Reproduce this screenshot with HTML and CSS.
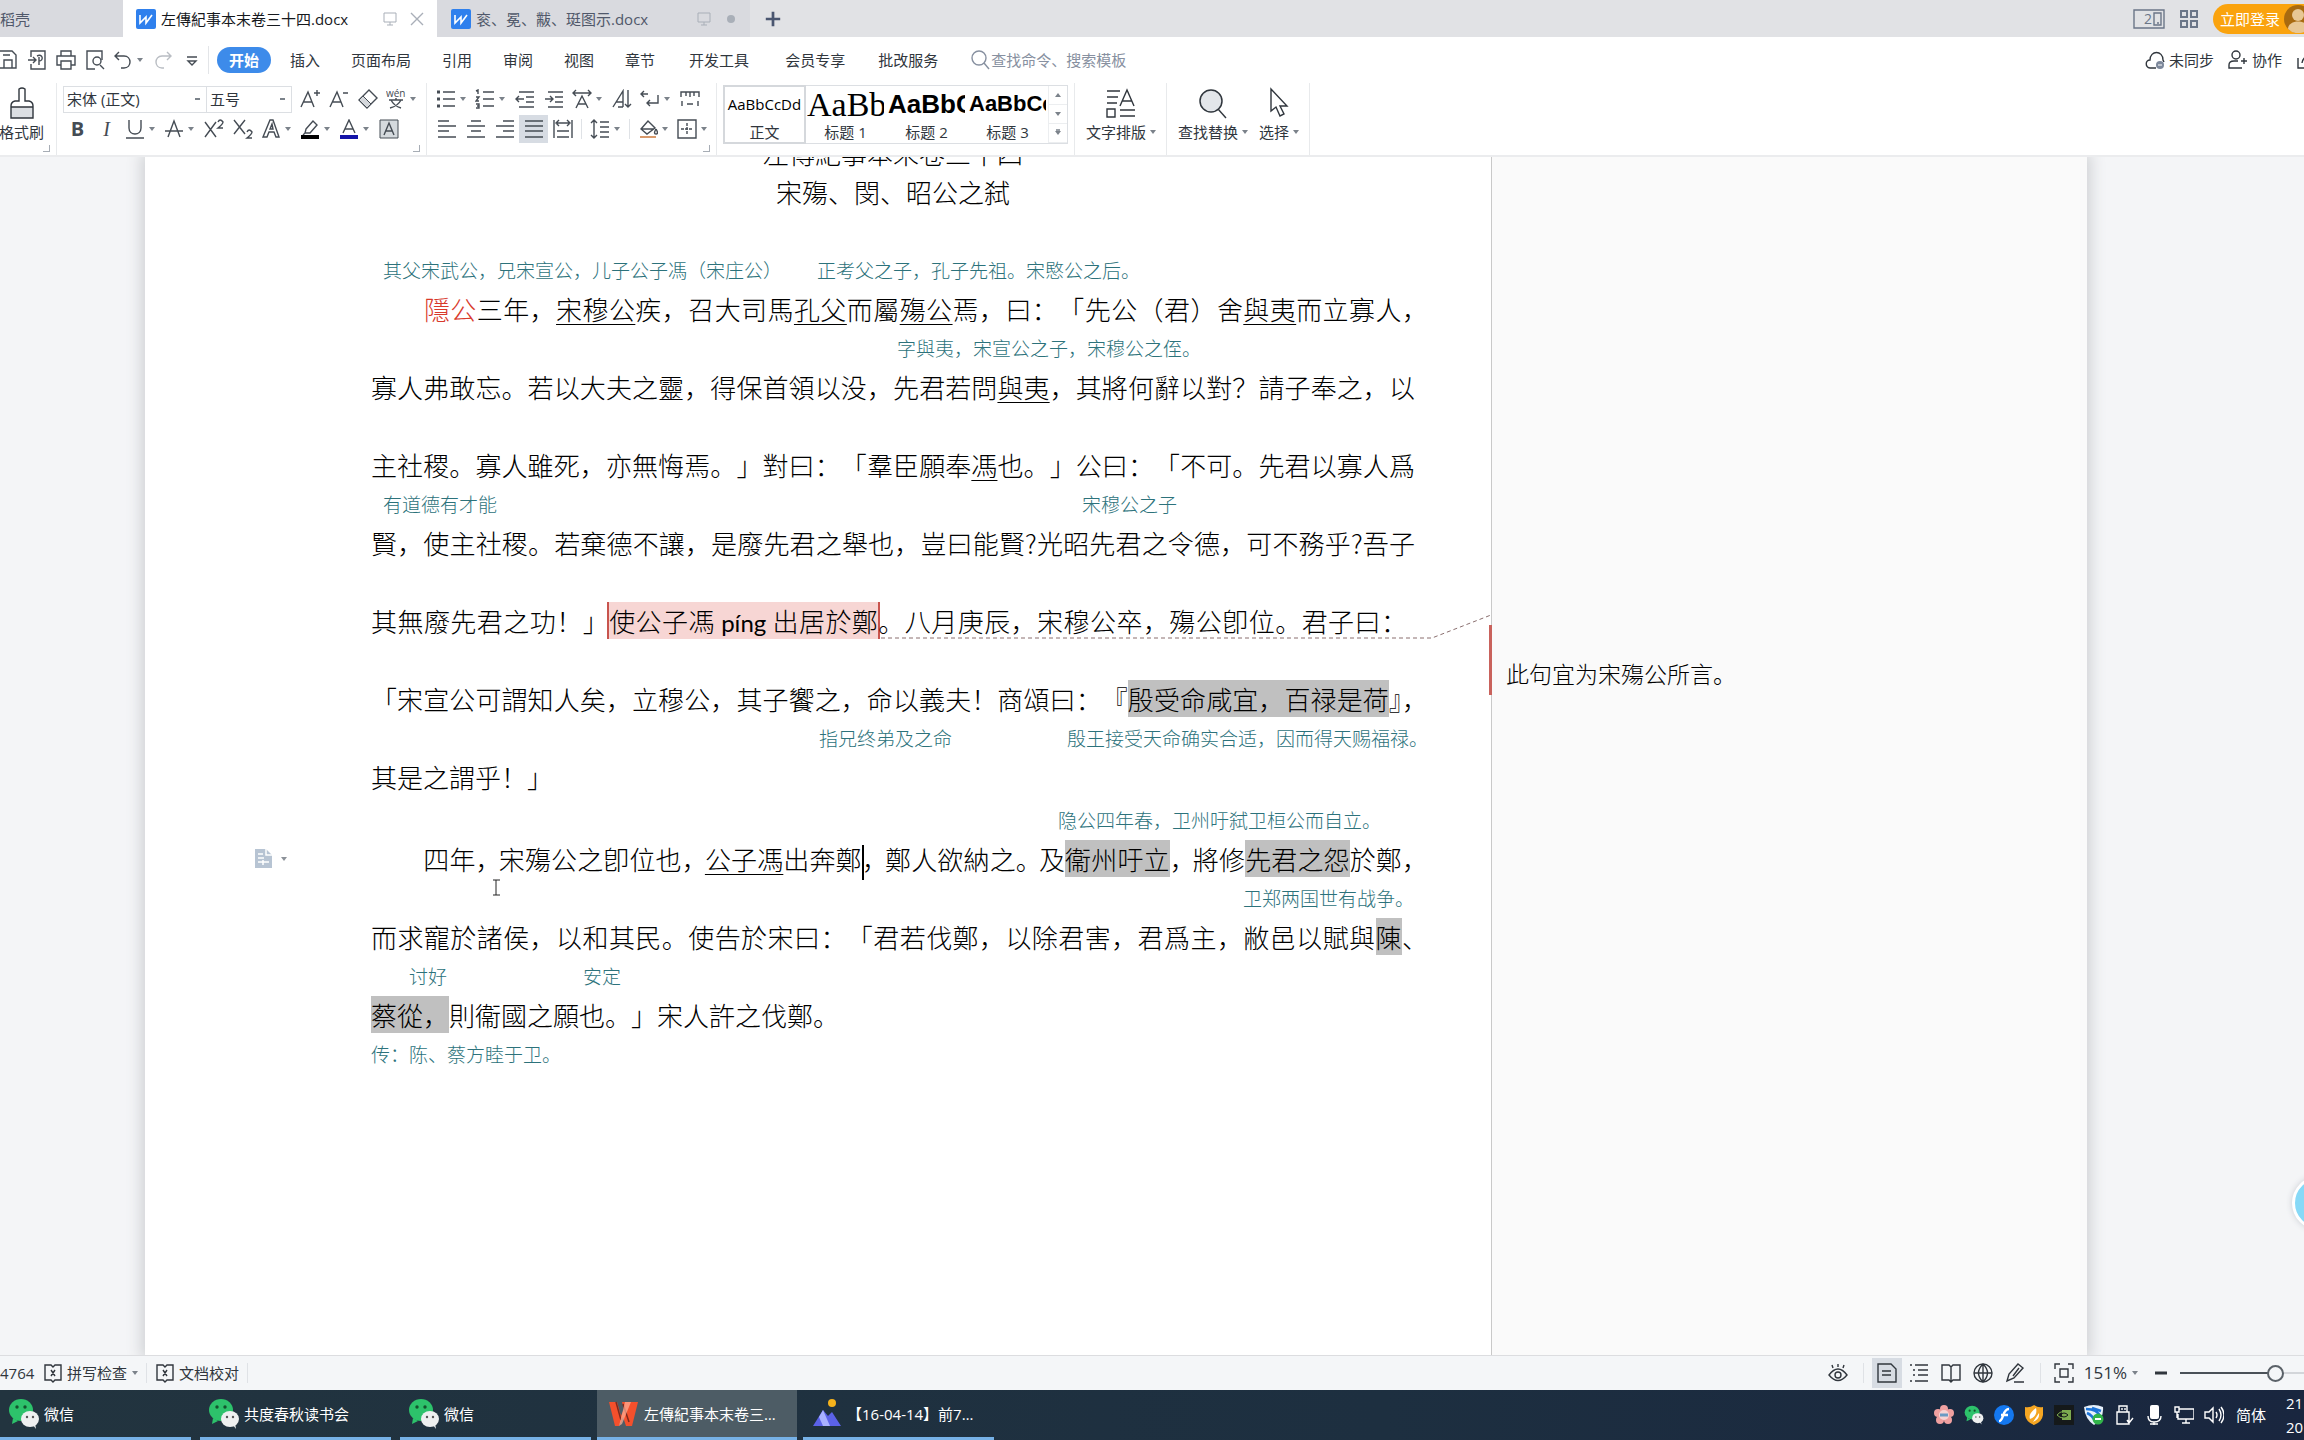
FILE: index.html
```html
<!DOCTYPE html>
<html lang="zh-CN">
<head>
<meta charset="utf-8">
<title>左傳紀事本末卷三十四.docx</title>
<meta name="viewport" content="width=device-width, initial-scale=1">
<link rel="stylesheet" href="styles.css">
</head>
<body>
<svg class="defs" aria-hidden="true">
  <symbol id="wdoc" viewBox="0 0 20 20"><rect width="20" height="20" rx="2" fill="#2f80ed"/><path d="M4 6v8l6-6 0 6 6-8" fill="none" stroke="#fff" stroke-width="1.6"/></symbol>
  <symbol id="monitor" viewBox="0 0 16 16"><path d="M2 2h12v9H2zM8 11v3M5 14h6" fill="none" stroke="currentColor"/></symbol>
  <symbol id="wechat" viewBox="0 0 32 32"><ellipse cx="13" cy="12" rx="12" ry="11" fill="#2dc26b"/><path d="M5 20l-1 6 6-3z" fill="#2dc26b"/><circle cx="9" cy="9" r="1.7" fill="#14532d"/><circle cx="17" cy="9" r="1.7" fill="#14532d"/><ellipse cx="22" cy="21" rx="9" ry="8" fill="#eef0f0"/><path d="M25 27l3 4-1-6z" fill="#eef0f0"/><circle cx="19" cy="19" r="1.2" fill="#555"/><circle cx="25" cy="19" r="1.2" fill="#555"/></symbol>
  <symbol id="proof" viewBox="0 0 20 20"><path d="M2 2h6l2 2 2-2h6v15h-6l-2 2-2-2H2zM8 7l4 6M12 7l-4 6" fill="none" stroke="currentColor" stroke-width="1.4"/></symbol>
</svg>

<header class="tabs">
  <a class="tab tab-home" href="#">稻壳</a>
  <a class="tab tab-active" href="#"><svg class="i"><use href="#wdoc"/></svg><span>左傳紀事本末卷三十四.docx</span><svg class="i16 push"><use href="#monitor"/></svg><svg class="i16" viewBox="0 0 16 16"><path d="M2 2l12 12M14 2L2 14" class="s"/></svg></a>
  <a class="tab tab-idle" href="#"><svg class="i"><use href="#wdoc"/></svg><span>衮、冕、黻、珽图示.docx</span><svg class="i16 push"><use href="#monitor"/></svg><svg class="i16" viewBox="0 0 16 16"><circle cx="8" cy="8" r="4" fill="currentColor"/></svg></a>
  <button class="tab-add" aria-label="新建"><svg class="i" viewBox="0 0 20 20"><path d="M10 2v16M2 10h16" class="s w3"/></svg></button>
  <div class="account">
    <button class="plain" aria-label="窗口"><svg width="32" height="20" viewBox="0 0 32 20"><path d="M1 1h30v18H1zM21 4h7v12h-7zM24 14h2" class="s"/><text x="11" y="15" font-size="14" fill="currentColor">2</text></svg></button>
    <button class="plain" aria-label="应用"><svg class="i" viewBox="0 0 20 20"><path d="M2 2h6v6H2zM12 2h6v6h-6zM2 12h6v6H2zM12 12h6v6h-6z" class="s w2"/></svg></button>
    <button class="login">立即登录<svg width="28" height="28" viewBox="0 0 28 28"><circle cx="14" cy="14" r="14" fill="#a86a10"/><circle cx="14" cy="10" r="6" fill="#e8c795"/><path d="M4 24c0-10 20-10 20 0a14 14 0 0 1-20 0z" fill="#e8c795"/></svg></button>
  </div>
</header>

<nav class="menu">
  <div class="quick">
    <button class="tool" aria-label="保存"><svg class="i" viewBox="0 0 20 20"><path d="M1 1h13l4 4v13H1zM6 18v-8h8v8M5 5h7" class="s"/></svg></button>
    <button class="tool" aria-label="输出"><svg class="i" viewBox="0 0 20 20"><path d="M4 7V1h14v18H4v-5M1 10h7M6 7l3 3-3 3M10 6c6-3 7 5 2 5M12 7v8" class="s"/></svg></button>
    <button class="tool" aria-label="打印"><svg class="i" viewBox="0 0 20 20"><path d="M5 6V1h10v5M5 15H1V6h18v9h-4M5 11h10v8H5z" class="s"/></svg></button>
    <button class="tool" aria-label="预览"><svg class="i" viewBox="0 0 20 20"><path d="M17 10V1H2v18h8M15 15l4 4" class="s"/><circle cx="12" cy="11" r="4" class="s"/></svg></button>
    <button class="tool drop" aria-label="撤销"><svg class="i" viewBox="0 0 20 20"><path d="M6 2L2 6l4 4M2 6h9c8 0 8 12 0 12H8" class="s"/></svg></button>
    <button class="tool faint" aria-label="恢复"><svg class="i" viewBox="0 0 20 20"><path d="M14 2l4 4-4 4M18 6H9c-8 0-8 12 0 12h2" class="s"/></svg></button>
    <button class="tool" aria-label="更多"><svg class="i" viewBox="0 0 20 20"><path d="M5 7h10M6 11h8l-4 4z" class="s"/></svg></button>
  </div>
  <div class="menu-items">
    <button class="current">开始</button><button>插入</button><button>页面布局</button><button>引用</button><button>审阅</button><button>视图</button><button>章节</button><button class="wide">开发工具</button><button class="wide">会员专享</button><button>批改服务</button>
  </div>
  <label class="search"><svg class="i" viewBox="0 0 20 20"><circle cx="9" cy="8" r="7" class="s"/><path d="M14 13l5 6" class="s"/></svg><input type="text" placeholder="查找命令、搜索模板" aria-label="查找命令"></label>
  <div class="share">
    <button class="plain"><svg class="i" viewBox="0 0 20 20"><path d="M11 18H5c-5-1-5-8 0-8 0-10 13-10 13 0l1 2" class="s"/><circle cx="15" cy="15" r="4" fill="#7d889b"/><path d="M13 15h4" stroke="#fff"/></svg>未同步</button>
    <button class="plain"><svg class="i" viewBox="0 0 20 20"><circle cx="8" cy="5" r="4" class="s"/><path d="M14 18H1v-3q0-4 5-4h4M13 11h6M16 8v6" class="s"/></svg>协作</button>
    <button class="plain" aria-label="分享"><svg class="i" viewBox="0 0 20 20"><path d="M2 8v10h16v-5M6 13c1-6 5-8 11-8" class="s"/></svg></button>
  </div>
</nav>

<section class="ribbon" aria-label="开始">
  <div class="group painter">
    <button class="big"><svg width="30" height="32" viewBox="0 0 30 32"><path d="M4 20h22v11H4z" fill="#dcdfe3"/><path d="M12 2q3-2 6 0v12h4q4 1 4 5v12H4V19q0-4 4-5h4zM4 20h22" class="s"/></svg><span>格式刷</span></button>
  </div>
  <div class="group rows font-group">
    <div class="row">
      <select class="combo face" aria-label="字体"><option>宋体 (正文)</option></select><select class="combo size" aria-label="字号"><option>五号</option></select>
      <button class="tool" aria-label="增大字号"><svg class="i" viewBox="0 0 20 20"><path d="M1 18L8 3l6 15M3 13h9M14 4h6M17 1v6" class="s"/></svg></button>
      <button class="tool" aria-label="减小字号"><svg class="i" viewBox="0 0 20 20"><path d="M1 18L8 3l6 15M3 13h9M14 4h5" class="s"/></svg></button>
      <button class="tool" aria-label="清除格式"><svg class="i" viewBox="0 0 20 20"><path d="M1 11L11 1l8 8L9 19z" class="s"/><path d="M5 7l8 8-4 4-8-8z" fill="#d5d8dc" stroke="currentColor"/></svg></button>
      <button class="tool drop" aria-label="拼音指南"><svg class="i" viewBox="0 0 20 20"><text x="0" y="8" font-size="10" fill="currentColor">wén</text><path d="M3 11h14M10 9v2M5 11q3 6 10 8M15 11q-3 6-11 8" class="s"/></svg></button>
    </div>
    <div class="row">
      <button class="tool glyph bold">B</button>
      <button class="tool glyph ital">I</button>
      <button class="tool drop" aria-label="下划线"><svg class="i" viewBox="0 0 20 20"><path d="M4 1v8c0 8 12 8 12 0V1M1 19h18" class="s"/></svg></button>
      <button class="tool drop" aria-label="删除线"><svg class="i" viewBox="0 0 20 20"><path d="M4 18l6-16 6 16M1 12h18" class="s"/></svg></button>
      <button class="tool" aria-label="上标"><svg class="i" viewBox="0 0 20 20"><path d="M1 3l11 15M12 3L1 18M14 3q2-4 5 0 0 2-5 6h5" class="s"/></svg></button>
      <button class="tool" aria-label="下标"><svg class="i" viewBox="0 0 20 20"><path d="M1 1l11 14M12 1L1 15M14 13q2-4 5 0 0 2-5 6h5" class="s"/></svg></button>
      <button class="tool drop" aria-label="文字效果"><svg class="i" viewBox="0 0 20 20"><path d="M2 18L9 1h3l6 17h-3l-2-5H8l-2 5zM9 10h3l-1-5z" class="s"/></svg></button>
      <button class="tool drop" aria-label="突出显示"><svg class="i" viewBox="0 0 20 20"><path d="M6 10l7-8 4 4-7 8H5zM5 14l-2 2" class="s"/><path d="M1 16h18v4H1z" fill="#000"/></svg></button>
      <button class="tool drop" aria-label="字体颜色"><svg class="i" viewBox="0 0 20 20"><path d="M4 14l6-13 6 13M6 10h8" class="s"/><path d="M1 16h18v4H1z" fill="#1414a8"/></svg></button>
      <button class="tool" aria-label="字符底纹"><svg class="i" viewBox="0 0 20 20"><path d="M1 1h18v18H1z" fill="#d5dade" stroke="currentColor"/><path d="M5 16l5-12 5 12M7 12h6" class="s"/></svg></button>
    </div>
  </div>
  <div class="group rows para-group">
    <div class="row">
      <button class="tool drop" aria-label="项目符号"><svg class="i" viewBox="0 0 20 20"><path d="M7 3h12M7 10h12M7 17h12" class="s"/><path d="M1 3h3M1 10h3M1 17h3" class="s w3"/></svg></button>
      <button class="tool drop" aria-label="编号"><svg class="i" viewBox="0 0 20 20"><path d="M8 3h11M8 10h11M8 17h11M1 2l2-1v4M1 8h3l-3 4h3M1 15h3v4H1M2 17h2" class="s"/></svg></button>
      <button class="tool" aria-label="减少缩进"><svg class="i" viewBox="0 0 20 20"><path d="M4 3h15M11 8h8M11 13h8M4 18h15M1 10h8M4 7l-3 3 3 3" class="s"/></svg></button>
      <button class="tool" aria-label="增加缩进"><svg class="i" viewBox="0 0 20 20"><path d="M4 3h15M11 8h8M11 13h8M4 18h15M1 10h8M6 7l3 3-3 3" class="s"/></svg></button>
      <button class="tool drop" aria-label="中文版式"><svg class="i" viewBox="0 0 20 20"><path d="M4 19l6-12 6 12M6 15h8M1 4h18M4 1L1 4l3 3M16 1l3 3-3 3" class="s"/></svg></button>
      <button class="tool" aria-label="排序"><svg class="i" viewBox="0 0 20 20"><path d="M1 18L11 2v16M4 13h7M6 18h5M16 1v17M13 15l3 3 3-3" class="s"/></svg></button>
      <button class="tool drop" aria-label="换行符"><svg class="i" viewBox="0 0 20 20"><path d="M4 2L1 5l3 3M1 5h7M18 6v8H7M10 11l-3 3 3 3" class="s"/></svg></button>
      <button class="tool" aria-label="制表位"><svg class="i" viewBox="0 0 20 20"><path d="M1 8V3h18v5M6 3v4M10 3v5M14 3v4M2 12v5M18 12v5M7 15h6" class="s"/></svg></button>
    </div>
    <div class="row">
      <button class="tool" aria-label="左对齐"><svg class="i" viewBox="0 0 20 20"><path d="M1 2h11M1 7h18M1 12h11M1 18h18" class="s"/></svg></button>
      <button class="tool" aria-label="居中"><svg class="i" viewBox="0 0 20 20"><path d="M5 2h10M1 7h18M5 12h10M1 18h18" class="s"/></svg></button>
      <button class="tool" aria-label="右对齐"><svg class="i" viewBox="0 0 20 20"><path d="M8 2h11M1 7h18M8 12h11M1 18h18" class="s"/></svg></button>
      <button class="tool pressed" aria-label="两端对齐"><svg class="i" viewBox="0 0 20 20"><path d="M1 2h18M1 7h18M1 12h18M1 18h18" class="s"/></svg></button>
      <button class="tool" aria-label="分散对齐"><svg class="i" viewBox="0 0 20 20"><path d="M1 1v18M19 1v18M4 4h12M6 1L3 4l3 3M14 1l3 3-3 3M4 12h12M4 18h12" class="s"/></svg></button>
      <i class="rule"></i>
      <button class="tool drop" aria-label="行距"><svg class="i" viewBox="0 0 20 20"><path d="M4 1v18M1 4l3-3 3 3M1 16l3 3 3-3M10 3h9M10 8h9M10 13h9M10 18h9" class="s"/></svg></button>
      <i class="rule"></i>
      <button class="tool drop" aria-label="底纹颜色"><svg class="i" viewBox="0 0 20 20"><path d="M3 10l7-8 7 7-8 6zM3 10h13" class="s"/><path d="M18 10q3 5 0 5t0-5" class="s"/><path d="M2 18h16" stroke="#d99a6c" stroke-width="2"/></svg></button>
      <button class="tool drop" aria-label="边框"><svg class="i" viewBox="0 0 20 20"><path d="M1 1h18v18H1z" class="s"/><path d="M10 4v12M4 10h12" class="s" stroke-dasharray="3 1"/></svg></button>
    </div>
  </div>
  <div class="group gallery-group">
    <div class="gallery">
      <button class="style on"><b class="p0">AaBbCcDd</b><span>正文</span></button>
      <button class="style"><b class="p1">AaBb</b><span>标题 1</span></button>
      <button class="style"><b class="p2">AaBbC</b><span>标题 2</span></button>
      <button class="style"><b class="p3">AaBbCc</b><span>标题 3</span></button>
      <div class="spin"><button aria-label="上"><i class="up"></i></button><button aria-label="下"><i class="down"></i></button><button aria-label="全部"><i class="down bar"></i></button></div>
    </div>
  </div>
  <div class="group layout-group">
    <button class="big"><svg width="32" height="32" viewBox="0 0 32 32"><path d="M2 4h13M2 10h11M2 16h10M2 22h8v8H2zM15 23h15M15 29h15M15 19l7-16 7 16M17 14h10" class="s"/></svg><span class="arrow">文字排版</span></button>
  </div>
  <div class="group find-group">
    <button class="big"><svg width="32" height="32" viewBox="0 0 32 32"><circle cx="14" cy="14" r="11" fill="#e3e6ea" stroke="currentColor" stroke-width="1.5"/><path d="M21 22l8 9" class="s"/></svg><span class="arrow">查找替换</span></button>
    <button class="big"><svg width="32" height="32" viewBox="0 0 32 32"><path d="M8 2v22l5-4 4 9 4-2-4-8h7z" class="s"/></svg><span class="arrow">选择</span></button>
  </div>
</section>

<main class="canvas">
  <div class="page">
    <article class="doc" lang="zh-CN">
      <h1 class="title">左傳紀事本末卷三十四</h1>
      <h2 class="title">宋殤、閔、昭公之弑</h2>
      <section class="para first">
        <p class="notes"><span class="n-edge">其父宋武公，兄宋宣公，儿子公子馮（宋庄公）</span><span class="n-kong">正考父之子，孔子先祖。宋愍公之后。</span></p>
        <p class="line hang">　　<span class="red">隱公</span>三年，<u>宋穆公</u>疾，召大司馬<u>孔父</u>而屬<u>殤公</u>焉，曰：「先公（君）舍<u>與夷</u>而立寡人，</p>
        <p class="notes"><span class="n-yuyi">字與夷，宋宣公之子，宋穆公之侄。</span></p>
        <p class="line">寡人弗敢忘。若以大夫之靈，得保首領以没，先君若問<u>與夷</u>，其將何辭以對？請子奉之，以</p>
        <p class="notes"></p>
        <p class="line">主社稷。寡人雖死，亦無悔焉。」對曰：「羣臣願奉<u>馮</u>也。」公曰：「不可。先君以寡人爲</p>
        <p class="notes"><span class="n-edge">有道德有才能</span><span class="n-son">宋穆公之子</span></p>
        <p class="line">賢，使主社稷。若棄德不讓，是廢先君之舉也，豈曰能賢?光昭先君之令德，可不務乎?吾子</p>
        <p class="notes"></p>
        <p class="line narrow">其無廢先君之功！」<mark class="commented">使公子馮 <span class="pinyin">píng</span> 出居於鄭</mark>。八月庚辰，宋穆公卒，殤公卽位。君子曰：<svg class="leader" width="610" height="26" viewBox="0 0 610 26"><path d="M0 24H551L610 1" fill="none" stroke="#8a6f6f" stroke-dasharray="4 3"/></svg></p>
        <p class="notes"></p>
        <p class="line hang">「宋宣公可謂知人矣，立穆公，其子饗之，命以義夫！商頌曰：『<mark>殷受命咸宜，百禄是荷</mark><span class="half">』</span>，</p>
        <p class="notes"><span class="n-brother">指兄终弟及之命</span><span class="n-yin">殷王接受天命确实合适，因而得天赐福禄。</span></p>
        <p class="line short">其是之謂乎！」</p>
      </section>
      <section class="para second">
        <p class="notes"><span class="n-zhou">隐公四年春，卫州吁弑卫桓公而自立。</span></p>
        <p class="line hang">　　四年<span class="tight">，</span>宋殤公之卽位也<span class="tight">，</span><u>公子馮</u>出奔鄭<i class="caret"></i><span class="tight">，</span>鄭人欲納之<span class="tight">。</span>及<mark>衞州吁立</mark><span class="tight">，</span>將修<mark>先君之怨</mark>於鄭，<button class="paste" aria-label="段落布局"><svg width="17" height="19" viewBox="0 0 17 19"><path d="M0 0h11l6 6v13H0z" fill="#b7c4d3"/><path d="M11 0v6h6M3 5h5M3 9h6M3 13h11M8 11v5" fill="none" stroke="#fff" stroke-width="1.5"/></svg></button><svg class="ibeam" width="9" height="17" viewBox="0 0 9 17"><path d="M1 1h7M4 1v15M1 16h7" stroke="#222" fill="none"/></svg></p>
        <p class="notes"><span class="n-war">卫郑两国世有战争。</span></p>
        <p class="line hang">而求寵於諸侯，以和其民。使告於宋曰：「君若伐鄭，以除君害，君爲主，敝邑以賦與<mark>陳</mark>、</p>
        <p class="notes"><span class="n-please">讨好</span><span class="n-calm">安定</span></p>
        <p class="line short"><mark>蔡從，</mark>則衞國之願也。」宋人許之伐鄭。</p>
        <p class="notes"><span>传：陈、蔡方睦于卫。</span></p>
      </section>
    </article>
    <aside class="comments"><p class="comment">此句宜为宋殤公所言。</p></aside>
  </div>
  <button class="bubble" aria-label="助手"></button>
</main>

<footer class="status">
  <span class="count">4764</span>
  <button class="plain"><svg class="i"><use href="#proof"/></svg><span class="arrow">拼写检查</span></button><i class="rule"></i>
  <button class="plain"><svg class="i"><use href="#proof"/></svg>文档校对</button><i class="rule"></i>
  <div class="views">
    <button class="view" aria-label="护眼"><svg class="i" viewBox="0 0 20 20"><path d="M1 12q9-12 18 0-9 11-18 0zM10 1v3M4 2l1 3M16 2l-1 3" class="s"/><circle cx="10" cy="12" r="3" class="s"/></svg></button><i class="rule"></i>
    <button class="view pressed" aria-label="页面"><svg class="i" viewBox="0 0 20 20"><path d="M1 1h13l5 5v13H1zM5 8h9M5 12h9" class="s"/></svg></button>
    <button class="view" aria-label="大纲"><svg class="i" viewBox="0 0 20 20"><path d="M1 2h2M6 2h13M4 7h2M9 7h10M4 12h2M9 12h10M1 18h2M6 18h13" class="s"/></svg></button>
    <button class="view" aria-label="阅读"><svg class="i" viewBox="0 0 20 20"><path d="M1 2h7l2 2 2-2h7v15h-7l-2 2-2-2H1zM10 4v14" class="s"/></svg></button>
    <button class="view" aria-label="网页"><svg class="i" viewBox="0 0 20 20"><circle cx="10" cy="10" r="9" class="s"/><path d="M1 10h18M10 1v18M10 1q-9 9 0 18M10 1q9 9 0 18" class="s"/></svg></button>
    <button class="view" aria-label="写作"><svg class="i" viewBox="0 0 20 20"><path d="M2 18l2-7 9-10 5 4-9 10zM8 13l6-8M9 19h10" class="s"/></svg></button><i class="rule"></i>
    <button class="view" aria-label="适应"><svg class="i" viewBox="0 0 20 20"><path d="M1 6V1h5M14 1h5v5M19 14v5h-5M6 19H1v-5M6 6h8v8H6z" class="s"/></svg></button>
    <button class="plain zoom-value"><span class="arrow">151%</span></button>
    <button class="view minus" aria-label="缩小"><svg class="i" viewBox="0 0 20 20"><path d="M4 10h12" class="s w3"/></svg></button>
    <input class="zoom" type="range" min="0" max="100" value="50" aria-label="显示比例">
  </div>
</footer>

<div class="taskbar">
  <button class="task"><svg class="i32"><use href="#wechat"/></svg>微信</button>
  <button class="task"><svg class="i32"><use href="#wechat"/></svg>共度春秋读书会</button>
  <button class="task"><svg class="i32"><use href="#wechat"/></svg>微信</button>
  <button class="task on"><svg class="i32" viewBox="0 0 32 32"><path d="M1 4h8l4 14 3-7-2-7h16l-6 24h-6l-3-9-4 9H7z" fill="#f4502c"/><path d="M8 4l5 18M15 6l6 18" stroke="#7d2a1e" stroke-width="1.5"/><path d="M17 4h6l-9 22-3 2z" fill="#ffb199" opacity=".7"/></svg>左傳紀事本末卷三…</button>
  <button class="task gap"><svg class="i32" viewBox="0 0 32 32"><path d="M2 28L12 12l5 6 4-4 9 14z" fill="#5b62e8"/><path d="M12 12l7 16h-7l-4-9z" fill="#a9b1ff"/><circle cx="21" cy="5" r="4" fill="#f5b21c"/></svg>【16-04-14】前7…</button>
  <div class="tray">
    <svg class="i" viewBox="0 0 20 20"><g fill="#f0a0a0"><circle cx="10" cy="4" r="4"/><circle cx="16" cy="8" r="4"/><circle cx="14" cy="15" r="4"/><circle cx="6" cy="15" r="4"/><circle cx="4" cy="8" r="4"/></g><circle cx="10" cy="10" r="5" fill="#f7d4d4"/><path d="M6 10h8" stroke="#6b9bc4" stroke-width="3"/></svg>
    <svg class="i"><use href="#wechat"/></svg>
    <svg class="i" viewBox="0 0 20 20"><circle cx="10" cy="10" r="10" fill="#1478f0"/><path d="M15 4c-7 0-5 12-10 12M7 10h7" stroke="#fff" stroke-width="2.4" fill="none"/></svg>
    <svg class="i" viewBox="0 0 20 20"><path d="M10 0q4 3 9 2v8q-1 7-9 10-8-3-9-10V2q5 1 9-2z" fill="#f5a623"/><path d="M12 3q-8 6-6 11 8-3 6-11zM9 17q7-3 6-9" fill="#fff"/></svg>
    <svg class="i" viewBox="0 0 20 20"><path d="M0 0h20v20H0z" fill="#15191a"/><path d="M8 5h9v10H8z" fill="#7cab4f"/><path d="M3 10q6-7 12 0-6 6-12 0z" fill="none" stroke="#7cab4f"/><path d="M6 10q4-4 8 0-4 4-8 0" fill="none" stroke="#15191a"/></svg>
    <svg class="i" viewBox="0 0 20 20"><path d="M0 2q10-4 19 0 1 12-9 18Q1 14 0 2z" fill="#e6f0fa"/><path d="M2 4q12 0 14 8M3 8q5 2 8 8M8 3l9 3" stroke="#1d74d8" stroke-width="2.5" fill="none"/><circle cx="14" cy="14" r="5.5" fill="#32b44a"/><path d="M11 14h6" stroke="#fff" stroke-width="2"/></svg>
    <svg class="i" viewBox="0 0 20 20"><path d="M5 7V1h8v6M3 7h12v12H3zM8 3v2M11 3v2M13 15l2 3 4-5" class="s"/></svg>
    <svg class="i" viewBox="0 0 20 20"><rect x="6" y="0" width="9" height="14" rx="2" fill="#fff"/><path d="M4 11q0 6 6 6 7 0 7-6M10 17v3M6 19h8" class="s"/></svg>
    <svg class="i" viewBox="0 0 20 20"><path d="M5 4h15v10H4V9M12 14v4M8 18h8M1 2h4v5H1zM3 7v6" class="s"/></svg>
    <svg class="i" viewBox="0 0 20 20"><path d="M1 7h4l4-4v14l-4-4H1zM12 7q2 3 0 6M15 4q4 6 0 12M17 2q6 8 0 16" class="s"/></svg>
    <span class="ime">简体</span>
    <span class="clock">21<br>20</span>
  </div>
</div>
</body>
</html>
```
FILE: styles.css
```css
* { box-sizing: border-box; }
body {
  margin: 0;
  height: 100vh;
  display: flex;
  flex-direction: column;
  overflow: hidden;
  background: #f4f5f7;
  color: #30363d;
  font: 15px/20px "Open Sans", "Noto Sans CJK SC", sans-serif;
}
button, input, select { font: inherit; color: inherit; background: none; border: 0; padding: 0; margin: 0; white-space: nowrap; }
a { color: inherit; text-decoration: none; }
p { margin: 0; }
svg { flex: none; display: block; }
.defs { position: absolute; width: 0; height: 0; }
.i { width: 20px; height: 20px; }
.i16 { width: 16px; height: 16px; }
.i32 { width: 32px; height: 32px; }
.s { fill: none; stroke: currentColor; stroke-width: 1.4; }
.w2 { stroke-width: 2; }
.w3 { stroke-width: 3; }
.rule { width: 1px; height: 20px; background: #dfe2e6; margin: 0 4px; flex: none; }

/* document tabs */
.tabs { display: flex; height: 37px; flex: none; background: #e1e2e5; }
.tab { display: flex; align-items: center; gap: 5px; white-space: nowrap; }
.tab-home { width: 123px; background: #d9dadf; color: #50586a; }
.tab-active { width: 314px; background: #fff; color: #16191d; padding: 0 12px 0 13px; }
.tab-idle { width: 313px; background: #d9dadf; color: #50586a; padding: 0 11px 0 14px; }
.tab .i16 { color: #a9afb8; }
.tab .push { margin-left: auto; margin-right: 6px; }
.tab-add { width: 46px; display: flex; align-items: center; justify-content: center; color: #4a5670; }
.tab-add svg { width: 18px; height: 18px; }
.account { display: flex; align-items: center; gap: 14px; margin: 0 -19px 0 auto; color: #6b7688; }
.plain { display: flex; align-items: center; gap: 4px; flex: none; }
.login { display: flex; align-items: center; gap: 4px; height: 30px; width: 110px; padding-left: 7px; border-radius: 15px; background: #faa30e; color: #fff; }

/* menu row */
.menu { display: flex; align-items: center; height: 46px; flex: none; background: #fff; }
.quick { display: flex; margin-left: -7px; padding-right: 2px; border-right: 1px solid #e3e5e8; }
.tool { width: 29px; height: 28px; flex: none; display: flex; align-items: center; justify-content: center; color: #454c54; }
.drop { width: 39px; justify-content: flex-start; padding-left: 4px; gap: 4px; }
.drop::after, .arrow::after {
  content: "";
  border: solid transparent;
  border-width: 4px 3px 0;
  border-top-color: #7b828a;
}
.faint { color: #b9bdc3; }
.menu-items { display: flex; margin-left: 8px; }
.menu-items button { padding: 0 15px; height: 26px; margin-right: 1px; }
.menu-items .wide { padding: 0 17px 0 18px; }
.menu-items .current { padding: 0 12px; margin-right: 4px; border-radius: 13px; background: #3d8bea; color: #fff; font-weight: 700; }
.search { display: flex; align-items: center; gap: 1px; margin-left: 16px; color: #8790a0; }
.search input { width: 160px; outline: 0; }
.search input::placeholder { color: #8790a0; opacity: 1; }
.share { display: flex; gap: 14px; margin: 0 -12px 0 auto; }

/* ribbon */
.ribbon { display: flex; height: 74px; flex: none; background: #fff; border-bottom: 2px solid #ebecee; }
.group { display: flex; border-right: 1px solid #e8eaec; position: relative; flex: none; }
.painter { width: 57px; }
.painter .big { margin-left: -1px; }
.font-group { width: 370px; padding-left: 6px; }
.para-group { width: 290px; padding-left: 5px; }
.painter::after, .font-group::after, .para-group::after {
  content: "";
  position: absolute;
  right: 6px;
  bottom: 3px;
  width: 6px;
  height: 6px;
  border: solid #a7adb5;
  border-width: 0 1px 1px 0;
}
.rows { flex-direction: column; padding-top: 1px; }
.row { display: flex; align-items: center; height: 30px; }
.combo { height: 27px; border: 1px solid #dcdfe3; appearance: none; padding-left: 3px; background: linear-gradient(#7b828a, #7b828a) right 6px center / 5px 2px no-repeat; }
.face { width: 144px; }
.size { width: 85px; border-left: 0; margin-right: 3px; }
.glyph { font-size: 20px; }
.bold { font-weight: 700; }
.ital { font-family: "Liberation Serif", serif; font-style: italic; }
.pressed { background: #d7dce3; }
.big { display: flex; flex-direction: column; align-items: center; padding-top: 4px; gap: 3px; }
.arrow { display: flex; align-items: center; gap: 4px; }
.gallery-group { width: 358px; padding: 2px 6px; }
.gallery { display: flex; height: 59px; width: 346px; border: 1px solid #dcdfe3; }
.style { width: 81px; flex: none; overflow: hidden; display: flex; flex-direction: column; align-items: center; padding: 0 2px; }
.style.on { outline: 2px solid #d5d8dc; outline-offset: -1px; }
.style b { height: 36px; line-height: 38px; width: 77px; overflow: hidden; text-align: center; font-weight: 400; color: #000; }
.style .p0 { font-size: 15px; line-height: 36px; }
.style .p1 { font: 34px/38px "Liberation Serif", serif; text-align: left; }
.style .p2 { font: 700 26px/36px "Liberation Sans", sans-serif; text-align: left; }
.style .p3 { font: 700 22px/36px "Liberation Sans", sans-serif; text-align: left; }
.spin { flex: 1; display: flex; flex-direction: column; border-left: 1px solid #eceef0; background: #fff; }
.spin button { flex: 1; display: flex; align-items: center; justify-content: center; border-bottom: 1px solid #eceef0; }
.up, .down { border: solid transparent; border-width: 0 3px 4px; border-bottom-color: #7b828a; }
.down { border-width: 4px 3px 0; border-top-color: #7b828a; }
.bar { box-shadow: 0 -3px 0 -1px #9aa0a7; }
.layout-group { width: 92px; padding-left: 11px; }
.find-group { width: 143px; padding-left: 11px; gap: 11px; }

/* document canvas */
.canvas { flex: 1; min-height: 0; overflow: hidden; display: flex; padding: 0 217px 0 145px; position: relative; }
.page { flex: 1; display: grid; grid-template-columns: minmax(0, 1346fr) minmax(0, 596fr); background: #fff; box-shadow: 0 0 14px 4px #d0d2d5; }
.doc { padding-left: 226px; font: 300 26px/39px "Noto Sans CJK SC", sans-serif; color: #000; text-spacing-trim: space-all; }
.title { margin: 0; width: 1044px; text-align: center; font: inherit; }
h1.title { margin-top: -24px; }
.first { margin-top: 39px; }
.second { margin-top: 4px; }
.line { width: 1044px; height: 39px; white-space: nowrap; text-align: justify; text-align-last: justify; position: relative; }
.hang { width: 1057px; }
.narrow { width: 1036px; }
.short { text-align-last: left; }
.notes { display: flex; align-items: center; width: 1100px; height: 39px; color: #2c727b; font-size: 19px; white-space: nowrap; }
.notes span { flex: none; }
.n-edge { margin-left: 12px; }
.n-kong { margin-left: 35px; }
.n-yuyi { margin-left: 526px; }
.n-son { margin-left: 585px; }
.n-brother { margin-left: 448px; }
.n-yin { margin-left: 115px; }
.n-zhou { margin-left: 687px; }
.n-war { margin-left: 872px; }
.n-please { margin-left: 38px; }
.n-calm { margin-left: 136px; }
.red { color: #d8392b; }
u { text-decoration: underline 1px; text-underline-offset: 4px; }
mark { background: #c0c0c0; color: inherit; }
.commented { background: #f7d6d4; box-shadow: -2px 0 #c8544e, 2px 0 #c8544e; }
.pinyin { font-family: Lato, sans-serif; font-weight: 400; font-size: 24px; }
.tight { margin-right: -3px; }
.half { margin-right: -13px; }
.caret { display: inline-block; width: 2px; height: 35px; margin-right: -2px; vertical-align: middle; background: #000; }
.leader { position: absolute; left: 510px; top: 13px; }
.paste { position: absolute; left: -116px; top: 10px; display: flex; align-items: center; gap: 9px; }
.paste::after { content: ""; border: solid transparent; border-width: 4px 3px 0; border-top-color: #8c9299; }
.ibeam { position: absolute; left: 121px; top: 40px; }
.comments { background: #fafafa; border-left: 1px solid #c9c9c9; padding-top: 468px; color: #000; }
.comment { margin-left: -3px; padding-left: 14px; border-left: 3px solid #c9625c; font: 300 23px/30px "Noto Sans CJK SC", sans-serif; height: 70px; padding-top: 33px; }
.bubble { position: absolute; right: -42px; bottom: 125px; width: 54px; height: 54px; border-radius: 50%; background: #86d9f7; border: 3px solid #fff; box-shadow: 0 0 6px #c9ccd2; }

/* status bar */
.status { display: flex; align-items: center; height: 35px; flex: none; background: #f4f6f8; border-top: 1px solid #dcdde0; }
.count { width: 43px; flex: none; }
.status .rule { margin: 0 8px; }
.status .arrow { gap: 5px; }
.views { display: flex; align-items: center; margin: 0 -66px 0 auto; }
.view { width: 30px; height: 30px; margin-right: 2px; display: flex; align-items: center; justify-content: center; flex: none; }
.zoom-value { margin: 0 8px 0 3px; font-size: 17px; }
.minus { margin-right: 4px; }
.zoom { appearance: none; width: 190px; height: 18px; flex: none; background: linear-gradient(90deg, #4a5158 50%, #d3d6da 50%) center / 100% 2px no-repeat; }
.zoom::-webkit-slider-thumb { appearance: none; width: 17px; height: 17px; border-radius: 50%; border: 2px solid #5a6168; background: #f4f6f8; }

/* system taskbar */
.taskbar { display: flex; height: 50px; flex: none; background: linear-gradient(90deg, #22343f, #1d2f40 60%, #19263f); color: #fff; }
.task { width: 191px; margin-right: 9px; padding-left: 8px; display: flex; align-items: center; gap: 4px; border-bottom: 3px solid #76b1e6; flex: none; }
.task.on { width: 200px; margin: 0 6px 0 -3px; padding-left: 11px; background: #4d5c65; }
.tray { display: flex; align-items: center; gap: 10px; margin-left: auto; }
.ime { margin-left: 2px; }
.clock { margin-left: 10px; font-size: 15px; line-height: 24px; width: 18px; }
```
